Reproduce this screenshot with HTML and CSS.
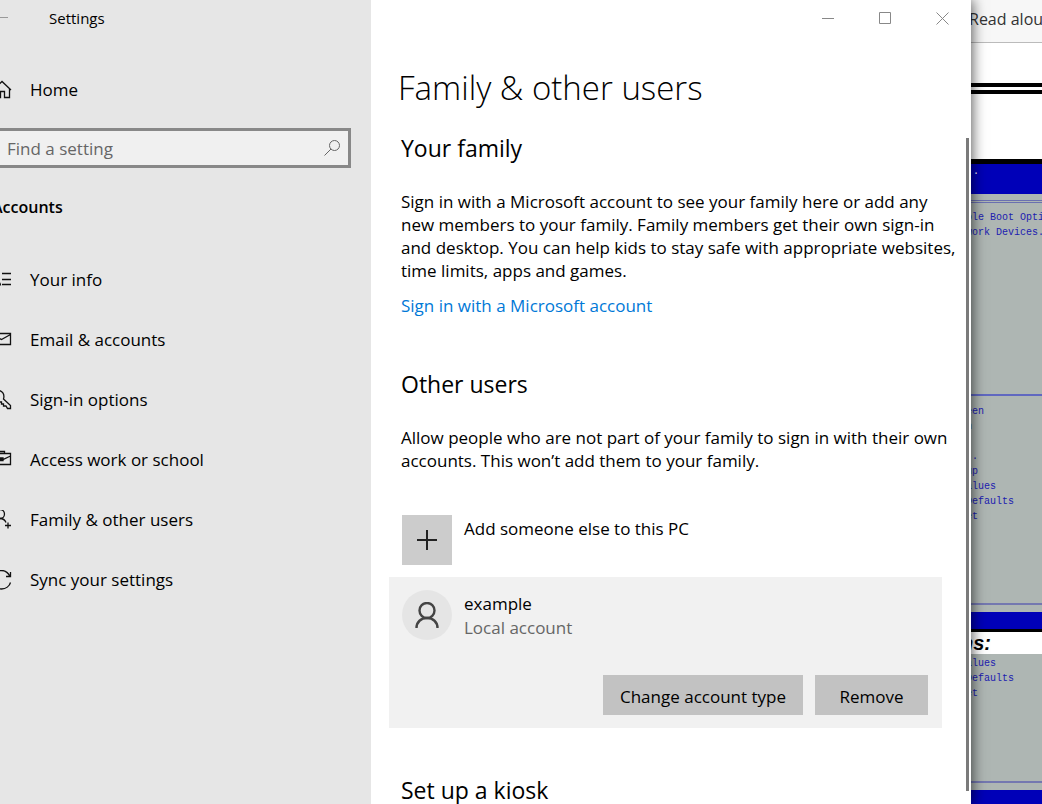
FILE: index.html
```html
<!DOCTYPE html>
<html lang="en">
<head>
    <meta charset="UTF-8">
    <title>Settings</title>
    <link rel="stylesheet" href="styles.css">
</head>
<body>
    <div class="desktop">
        <aside class="sidebar">
            <div class="titlebar">
                <button class="back" aria-label="Back">
                    <svg width="16" height="16" viewBox="0 0 16 16"><path d="M16 7.5H1M7 1L1 7.5L7 14"/></svg>
                </button>
                <span>Settings</span>
            </div>
            <a class="nav-item home" href="#home">
                <svg width="20" height="20" viewBox="0 0 20 20"><path d="M1 10L10 1.5L19 10M3.5 8V17.5H8.5V11.5H12.5V17.5H17.5V8.5"/></svg>
                Home
            </a>
            <div class="search">
                <input type="text" placeholder="Find a setting" aria-label="Find a setting">
                <svg width="16" height="16" viewBox="0 0 16 16"><circle cx="10.5" cy="5.5" r="5"/><path d="M7 9L0.5 15.5"/></svg>
            </div>
            <h3>Accounts</h3>
            <nav>
                <a class="nav-item" href="#info">
                    <svg width="20" height="20" viewBox="0 0 20 20"><circle cx="4" cy="7" r="2.5"/><path d="M0 15.5C0 10 8 10 8.5 15.5M10 3.5H19M10 9.5H19M10 14.5H19"/></svg>
                    Your info
                </a>
                <a class="nav-item" href="#email">
                    <svg width="20" height="20" viewBox="0 0 20 20"><path d="M0.5 3.5H18.5V14.5H0.5ZM0.5 4.5L9.5 9.5L18.5 4.5"/></svg>
                    Email &amp; accounts
                </a>
                <a class="nav-item" href="#signin">
                    <svg width="20" height="20" viewBox="0 0 20 20"><path d="M18.5 18.5V15.5L11.5 9C13 4 10 0.5 6.5 0.5C3 0.5 0.5 3 0.5 6.5C0.5 10 4 12.5 8 12H9.5V14H11.5V16H14L15.5 18.5Z"/><circle cx="5" cy="5" r="1"/></svg>
                    Sign-in options
                </a>
                <a class="nav-item" href="#work">
                    <svg width="20" height="20" viewBox="0 0 20 20"><path d="M0.5 3.5H18.5V14.5H0.5ZM5.5 3.5V1.5H12.5V3.5M0.5 6L7.5 9.5H11L18.5 6M7.5 8H11V10.5H7.5Z"/></svg>
                    Access work or school
                </a>
                <a class="nav-item" href="#family">
                    <svg width="20" height="20" viewBox="0 0 20 20"><circle cx="8" cy="4" r="4.5"/><path d="M0.5 16C0.5 11 4 8.5 8 8.5C10.5 8.5 13 10 14 12.5M16 12.5V18.5M13 15.5H19"/></svg>
                    Family &amp; other users
                </a>
                <a class="nav-item" href="#sync">
                    <svg width="20" height="20" viewBox="0 0 20 20"><path d="M18 6.5C16 2 12.5 0.5 9.5 0.5C4 0.5 0.5 5 0.5 10C0.5 15 4.5 19 9.5 19C14 19 17.5 16 18.5 12.5M18.5 2V6.5H14"/></svg>
                    Sync your settings
                </a>
            </nav>
        </aside>

        <main class="content">
            <div class="controls">
                <button aria-label="Minimize"><svg width="13" height="13" viewBox="0 0 13 13"><path d="M0 6.5H12"/></svg></button>
                <button aria-label="Maximize"><svg width="13" height="13" viewBox="0 0 13 13"><path d="M0.5 0.5H11.5V11.5H0.5Z"/></svg></button>
                <button aria-label="Close"><svg width="13" height="13" viewBox="0 0 13 13"><path d="M0.5 0.5L12.5 12.5M12.5 0.5L0.5 12.5"/></svg></button>
            </div>
            <div class="page">
                <h1>Family &amp; other users</h1>

                <h2>Your family</h2>
                <p>Sign in with a Microsoft account to see your family here or add any<br>
                new members to your family. Family members get their own sign-in<br>
                and desktop. You can help kids to stay safe with appropriate websites,<br>
                time limits, apps and games.</p>
                <a class="link" href="#microsoft">Sign in with a Microsoft account</a>

                <h2>Other users</h2>
                <p>Allow people who are not part of your family to sign in with their own<br>
                accounts. This won’t add them to your family.</p>

                <button class="add">
                    <span class="plus"><svg width="20" height="20" viewBox="0 0 20 20"><path d="M10 0V20M0 10H20"/></svg></span>
                    <span class="label">Add someone else to this PC</span>
                </button>

                <section class="user">
                    <div class="user-info">
                        <span class="avatar"><svg width="24" height="26" viewBox="0 0 24 26"><circle cx="12" cy="8.5" r="7.5"/><path d="M1.5 26C1.5 20 6 16 12 16C18 16 22.5 20 22.5 26"/></svg></span>
                        <div class="label">
                            <div>example</div>
                            <div class="muted">Local account</div>
                        </div>
                    </div>
                    <div class="actions">
                        <button class="change">Change account type</button>
                        <button class="remove">Remove</button>
                    </div>
                </section>

                <h2>Set up a kiosk</h2>
            </div>
            <div class="scrollbar"></div>
        </main>

        <!-- document open behind the settings window -->
        <div class="document">
            <div class="toolbar">Read aloud</div>
            <div class="rule"></div>
            <div class="bios first">
                <div class="bios-head">.</div>
                <div class="bios-help">
                    <pre>ble Boot Opti
work Devices.</pre>
                </div>
                <pre class="bios-keys">een
n

 .
up
alues
Defaults
et</pre>
                <div class="bios-foot"></div>
            </div>
            <div class="caption">ns:</div>
            <div class="bios second">
                <pre class="bios-keys">alues
Defaults
et</pre>
                <div class="bios-foot"></div>
            </div>
        </div>
    </div>
</body>
</html>
```
FILE: styles.css
```css
* {
    margin: 0;
    padding: 0;
    box-sizing: border-box;
}

body {
    font-family: "Segoe UI", "Open Sans", "Noto Sans", sans-serif;
    font-size: 17px;
    line-height: 24px;
    color: #000;
    overflow: hidden;
}

button,
input {
    font: inherit;
    color: inherit;
    border: none;
    background: none;
}

svg {
    display: block;
    flex: none;
    fill: none;
    stroke: #111;
}

.desktop {
    display: grid;
    grid-template-columns: 371px minmax(0, 1fr) 71px;
    height: 100vh;
    overflow: hidden;
}

/* the window runs past the left edge of the screen */
.sidebar {
    margin-left: -24px;
    padding: 0 20px 0 16px;
    background: #e6e6e6;
}

.titlebar {
    display: flex;
    align-items: center;
    gap: 41px;
    height: 36px;
    font-size: 15px;
}

.back svg {
    stroke: #999;
}

.nav-item {
    display: flex;
    align-items: center;
    gap: 18px;
    height: 60px;
    color: #000;
    text-decoration: none;
}

.nav-item svg {
    stroke-width: 1.3;
}

.home {
    margin-top: 24px;
}

.search {
    display: flex;
    align-items: center;
    height: 40px;
    margin-top: 8px;
    padding: 0 8px 0 12px;
    border: 3px solid #888;
    background: #f0f0f0;
}

.search input {
    flex: 1;
    min-width: 0;
    padding-top: 2px;
    outline: none;
}

.search input::placeholder {
    color: #666;
    opacity: 1;
}

.search svg {
    stroke: #666;
}

h3 {
    margin: 27px 0 31px;
    font-size: 16px;
    font-weight: 600;
}

.content {
    position: relative;
    z-index: 1;
    background: #fff;
    box-shadow: 2px 0 12px rgba(0, 0, 0, 0.6);
    clip-path: inset(0 -20px 0 0);
}

.controls {
    display: flex;
    justify-content: flex-end;
    height: 36px;
}

.controls button {
    display: flex;
    align-items: center;
    justify-content: center;
    width: 57px;
}

.controls svg {
    stroke: #888;
}

.page {
    padding: 28px 29px 0 30px;
}

h1 {
    margin-left: -3px;
    font-size: 33px;
    font-weight: 300;
    line-height: 48px;
}

h2 {
    font-size: 23px;
    font-weight: 400;
    line-height: 32px;
}

h1 + h2 {
    margin-top: 20px;
}

p {
    margin-top: 26px;
    line-height: 23px;
    white-space: nowrap;
}

.link {
    display: block;
    margin: 12px 0 50px;
    color: #0078d7;
    text-decoration: none;
}

.add {
    display: flex;
    align-items: flex-start;
    gap: 12px;
    margin: 43px 0 12px 1px;
}

.plus {
    display: flex;
    align-items: center;
    justify-content: center;
    width: 50px;
    height: 50px;
    background: #ccc;
}

.plus svg {
    stroke: #222;
    stroke-width: 2;
}

.label {
    padding-top: 2px;
}

.user {
    margin-left: -12px;
    padding: 13px 14px 13px 13px;
    background: #f1f1f1;
}

.user-info {
    display: flex;
    gap: 12px;
}

.avatar {
    display: flex;
    align-items: center;
    justify-content: center;
    width: 50px;
    height: 50px;
    border-radius: 50%;
    background: #e5e5e5;
}

.avatar svg {
    stroke: #444;
    stroke-width: 2.4;
}

.muted {
    color: #666;
}

.actions {
    display: flex;
    justify-content: flex-end;
    gap: 12px;
    margin-top: 35px;
}

.actions button {
    height: 40px;
    padding-top: 3px;
    background: #c2c2c2;
}

.change {
    width: 200px;
}

.remove {
    width: 113px;
}

.user + h2 {
    margin-top: 46px;
}

.scrollbar {
    position: absolute;
    top: 138px;
    right: 2px;
    bottom: 15px;
    width: 3px;
    background: #7a7a7a;
}

/* lines start under the settings window */
.document {
    overflow: hidden;
    background: #fff;
    white-space: nowrap;
}

.toolbar {
    height: 43px;
    padding-top: 7px;
    border-bottom: 1px solid #bbb;
    background: #f7f7f7;
    color: #333;
    font-size: 16px;
    text-indent: -2px;
}

.rule {
    height: 11px;
    margin: 40px 0 65px;
    border-top: 4px solid #000;
    border-bottom: 4px solid #000;
}

.bios {
    display: flex;
    flex-direction: column;
    background: #aeb6b3;
    color: #2020b0;
    font: 10px/15px "Liberation Mono", monospace;
}

.bios pre {
    margin-left: -5px;
    font: inherit;
}

.first {
    height: 473px;
    border-top: 5px solid #000;
    border-bottom: 3px solid #000;
}

.second {
    height: 150px;
}

.bios-head {
    height: 30px;
    padding-left: 2px;
    background: #0000b8;
    color: #fff;
}

.bios-help {
    height: 196px;
    margin-top: 6px;
    padding-top: 7px;
    border-top: 3px double #6a70b0;
    border-bottom: 2px solid #6068c0;
}

.bios-keys {
    flex: 1;
    padding-top: 8px;
}

.second .bios-keys {
    padding-top: 2px;
}

.bios-foot {
    height: 26px;
    border-top: 2px solid #7478b0;
    background: linear-gradient(#aeb6b3 7px, #0000b8 7px);
}

.second .bios-foot {
    height: 23px;
}

.caption {
    height: 22px;
    font: italic bold 20px/22px "Liberation Sans", sans-serif;
    text-indent: -10px;
}
```
